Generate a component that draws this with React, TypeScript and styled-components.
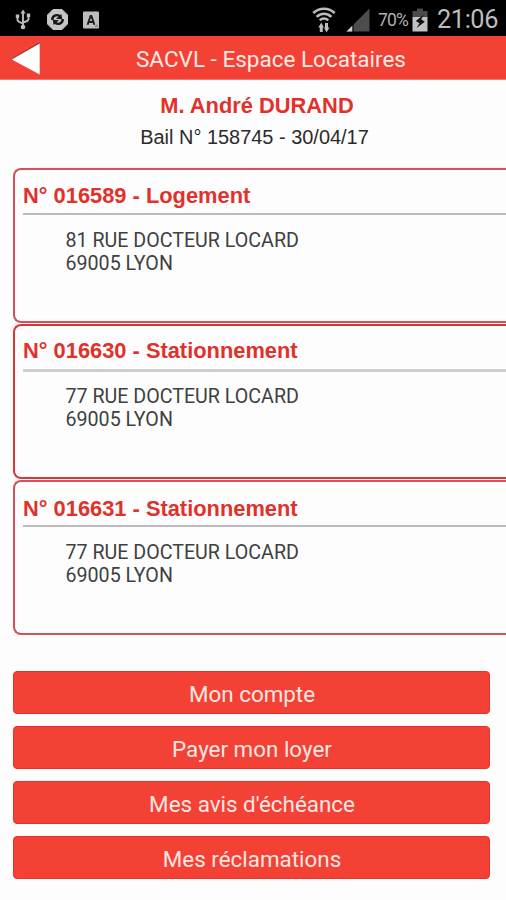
import React from "react";
import styled, { createGlobalStyle } from "styled-components";

const GlobalStyle = createGlobalStyle`
  * { box-sizing: border-box; }
  html, body { margin: 0; background: #fefdfe; overflow: hidden; }
`;

const Screen = styled.div`
  display: flex;
  flex-direction: column;
  width: 506px;
  height: 900px;
  overflow: hidden;
  background: #fefdfe;
  font-family: Roboto, sans-serif;
`;

const StatusBar = styled.div`
  display: flex;
  justify-content: space-between;
  height: 36px;
  flex: none;
  padding: 0 8px 0 13px;
  background: #000;
  color: #c4c4c4;
`;

const StatusGroup = styled.div`
  display: flex;
  align-items: center;
  padding-top: 3px;
`;

const StatusIcon = styled.svg<{ $gap?: number }>`
  display: block;
  flex: none;
  margin-right: ${(p) => p.$gap ?? 0}px;
`;

const BatteryLevel = styled.span`
  width: 34px;
  font-size: 17.5px;
  letter-spacing: -0.8px;
  line-height: 30px;
  color: #b0b0b0;
`;

const Clock = styled.span`
  font-size: 25.3px;
  letter-spacing: -0.4px;
  line-height: 30px;
  color: #bdbdbd;
`;

const Header = styled.header`
  display: grid;
  grid-template-columns: 35px 1fr;
  align-items: center;
  height: 44px;
  flex: none;
  padding-left: 11px;
  background: #f34135;
  border-bottom: 1px solid #f5766c;
`;

const BackButton = styled.button`
  display: block;
  width: 30px;
  height: 36px;
  padding: 0;
  border: 0;
  background: none;
`;

const BackArrow = styled.svg`
  display: block;
`;

const Title = styled.h1`
  margin: 0;
  padding: 2px 0 0 90px;
  font-size: 22.5px;
  font-weight: 400;
  line-height: 42px;
  color: #ffeae6;
  white-space: nowrap;
`;

const Tenant = styled.section`
  height: 88px;
  flex: none;
  padding-top: 12px;
  font-family: "Liberation Sans", Arial, sans-serif;
  text-align: center;
`;

const TenantName = styled.div`
  padding: 1px 0 0 8px;
  font-size: 21.85px;
  font-weight: 700;
  line-height: 26px;
  color: #e2302a;
`;

const Lease = styled.div`
  padding-left: 3px;
  margin-top: 5px;
  font-size: 19.95px;
  line-height: 26px;
  color: #2b2b2b;
`;

const CardList = styled.div`
  display: flex;
  flex-direction: column;
  gap: 1px;
  flex: none;
  padding-left: 12.5px;
`;

const Card = styled.article<{ $color: string }>`
  height: 155px;
  padding: 13px 0 0 8.5px;
  border: 2px solid ${(p) => p.$color};
  border-right: 0;
  border-radius: 8px 0 0 8px;
`;

const CardTitle = styled.h2<{ $shift: number }>`
  margin: ${(p) => p.$shift}px 0 0;
  font-family: "Liberation Sans", Arial, sans-serif;
  font-size: 21.85px;
  font-weight: 700;
  line-height: 26px;
  color: #e2302a;
  white-space: nowrap;
`;

const Divider = styled.div<{ $gap: number; $size: number; $color: string }>`
  height: ${(p) => p.$size}px;
  margin-top: ${(p) => p.$gap}px;
  background: ${(p) => p.$color};
`;

const Address = styled.p<{ $gap: number }>`
  margin: ${(p) => p.$gap}px 0 0;
  padding-left: 42.5px;
  font-size: 19.65px;
  line-height: 23px;
  color: #404040;
  white-space: pre-line;
`;

const Actions = styled.nav`
  display: flex;
  flex-direction: column;
  gap: 12px;
  padding: 36px 16px 0 13px;
`;

const ActionButton = styled.button`
  height: 43px;
  flex: none;
  padding: 3px 0 0 1px;
  border: 1px solid #ec3025;
  border-radius: 4px;
  background: #f34135;
  color: #ffe6e2;
  font-family: Roboto, sans-serif;
  font-size: 22.4px;
  line-height: 38px;
`;

const lots = [
  { title: "N° 016589 - Logement", address: "81 RUE DOCTEUR LOCARD\n69005 LYON", color: "#d4505a", shift: 0, gap: 4, size: 2, line: "#bdbdbf", addressGap: 14 },
  { title: "N° 016630 - Stationnement", address: "77 RUE DOCTEUR LOCARD\n69005 LYON", color: "#d8383a", shift: -1, gap: 5, size: 3, line: "#cfcfd0", addressGap: 13 },
  { title: "N° 016631 - Stationnement", address: "77 RUE DOCTEUR LOCARD\n69005 LYON", color: "#d4505a", shift: 1, gap: 3, size: 2, line: "#bcb8bb", addressGap: 14 },
];

const actions = ["Mon compte", "Payer mon loyer", "Mes avis d'échéance", "Mes réclamations"];

function UsbIcon() {
  return (
    <StatusIcon $gap={14} width="20" height="22" viewBox="0 0 20 22" fill="none" stroke="#bcbcbc" strokeWidth="1.9">
      <path d="M10 3v16M4.500 7v3.500c0 3 3.500 3 5.500 3.800M15.500 6v4c0 2.500-3.500 2.700-5.500 3.500" />
      <path d="M10 .5l2.600 4H7.400z" fill="#bcbcbc" stroke="none" />
      <circle cx="10" cy="18" r="2.300" fill="#bcbcbc" stroke="none" />
      <path d="M2.800 5.500h3.400V9H2.800zM13.800 4.500h3.400V8h-3.400z" fill="#bcbcbc" stroke="none" />
    </StatusIcon>
  );
}

function SyncIcon() {
  return (
    <StatusIcon $gap={15} width="21" height="21" viewBox="0 0 21 21">
      <path d="M6 .5h9L20.500 6v9L15 20.500H6L.5 15V6z" fill="#c6c6c6" stroke="#c6c6c6" strokeLinejoin="round" />
      <path d="M5.300 11C5 6.800 9.500 4.800 13 7.200M15.700 10c.3 4.200-4.200 6.200-7.700 3.800" fill="none" stroke="#181818" strokeWidth="2.400" />
      <path d="M9 9.800l6.200.4-.8-5.200zM12 11.200l-6.200-.4.800 5.200z" fill="#181818" />
    </StatusIcon>
  );
}

function LetterIcon() {
  return (
    <StatusIcon width="16" height="18" viewBox="0 0 16 18">
      <rect y=".5" width="16" height="17" rx="1" fill="#bdbdbd" />
      <path d="M4.600 13.800L7.600 5h.8l3 8.800M5.800 11h4.400" fill="none" stroke="#1a1a1a" strokeWidth="1.900" />
      <path d="M11 16l3.500-3v3z" fill="#858585" />
    </StatusIcon>
  );
}

function WifiIcon() {
  return (
    <StatusIcon $gap={10} width="24" height="26" viewBox="0 0 24 26" fill="none" stroke="#bcbcbc">
      <path d="M1.300 6C7 .2 17 .2 22.700 6M4.600 9.800c4-4.200 10.800-4.200 14.800 0M7.800 13.400c2.300-2.400 6.100-2.400 8.400 0" strokeWidth="2.500" />
      <path d="M9.300 25v-6M14.500 16v6" strokeWidth="3" />
      <path d="M6.300 20.500l3-5 2.600 5zM12 20.500l2.500 5 3-5z" fill="#bcbcbc" stroke="none" />
    </StatusIcon>
  );
}

function SignalIcon() {
  return (
    <StatusIcon $gap={8} width="24" height="24" viewBox="0 0 24 24">
      <path d="M23.500.5V23.500H.5z" fill="#4d4d4d" />
      <path d="M6.500 17.500v6H.5z" fill="#d0d0d0" />
      <path d="M7 15v9" stroke="#000" />
    </StatusIcon>
  );
}

function BatteryIcon() {
  return (
    <StatusIcon $gap={9} width="16" height="24" viewBox="0 0 16 24">
      <path d="M5 .5h6V3h4.500v6H.5V3H5z" fill="#4b4b4b" />
      <path d="M.5 9h15v14.500H.5z" fill="#c2c2c2" />
      <path d="M12 6.500L3.800 13l3.700 2.300L4.500 20l8.300-6.300-3.600-2.400z" fill="#101010" />
    </StatusIcon>
  );
}

export default function App() {
  return (
    <Screen>
      <GlobalStyle />
      <StatusBar>
        <StatusGroup>
          <UsbIcon />
          <SyncIcon />
          <LetterIcon />
        </StatusGroup>
        <StatusGroup>
          <WifiIcon />
          <SignalIcon />
          <BatteryLevel>70%</BatteryLevel>
          <BatteryIcon />
          <Clock>21:06</Clock>
        </StatusGroup>
      </StatusBar>
      <Header>
        <BackButton aria-label="Retour">
          <BackArrow width="30" height="36" viewBox="0 0 30 36">
            <path d="M0 19L28.500 2V7L4 20z" fill="#8f3f3a" />
            <path d="M.8 19.500L28.700 3.500V34.500z" fill="#fff" />
          </BackArrow>
        </BackButton>
        <Title>SACVL - Espace Locataires</Title>
      </Header>
      <Tenant>
        <TenantName>M. André DURAND</TenantName>
        <Lease>Bail N° 158745 - 30/04/17</Lease>
      </Tenant>
      <CardList>
        {lots.map((lot) => (
          <Card key={lot.title} $color={lot.color}>
            <CardTitle $shift={lot.shift}>{lot.title}</CardTitle>
            <Divider $gap={lot.gap} $size={lot.size} $color={lot.line} />
            <Address $gap={lot.addressGap}>{lot.address}</Address>
          </Card>
        ))}
      </CardList>
      <Actions>
        {actions.map((label) => (
          <ActionButton key={label}>{label}</ActionButton>
        ))}
      </Actions>
    </Screen>
  );
}
